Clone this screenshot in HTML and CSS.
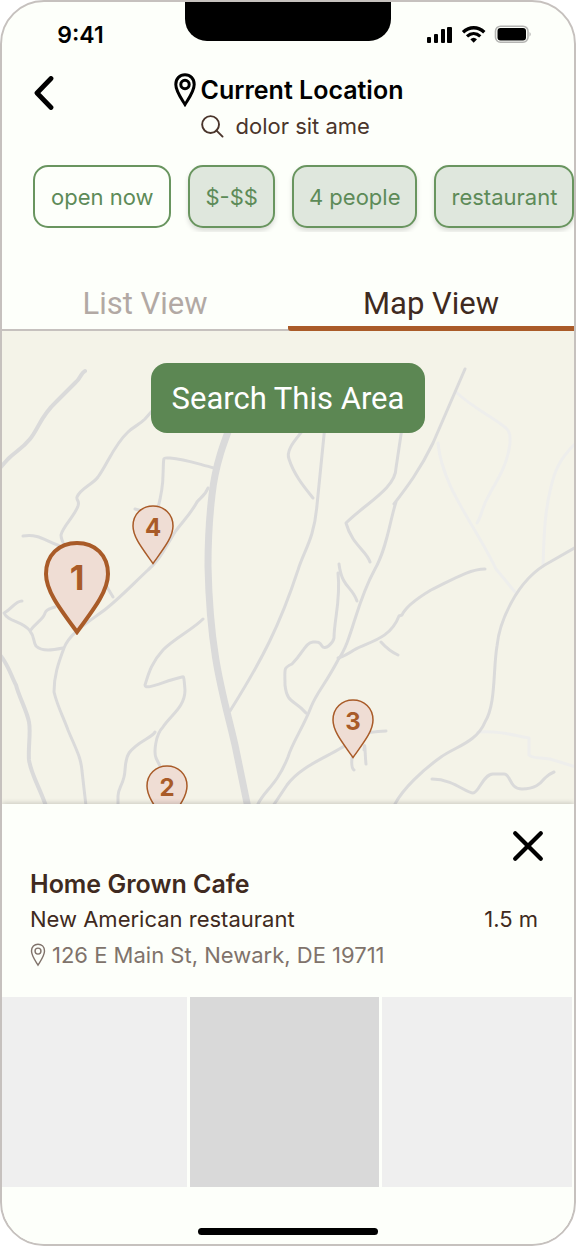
FILE: index.html
```html
<!DOCTYPE html>
<html lang="en">
<head>
<meta charset="utf-8">
<meta name="viewport" content="width=device-width, initial-scale=1">
<title>Current Location – Map View</title>
<link rel="stylesheet" href="styles.css">
</head>
<body>
<svg class="defs" aria-hidden="true">
  <symbol id="pin-outline" viewBox="0 0 22 34">
    <path d="M11 31.500C6 23.500 1.800 18 1.800 11.500C1.800 5.500 5.800 1.800 11 1.800S20.200 5.500 20.200 11.500C20.200 18 16 23.500 11 31.500Z" fill="none" stroke="currentColor"/>
    <circle cx="11" cy="11.500" r="4.200" fill="none" stroke="currentColor"/>
  </symbol>
  <symbol id="marker" viewBox="0 0 42 60">
    <path d="M21 58.500C10 43 1 32 1 21C1 9 10 1 21 1S41 9 41 21C41 32 32 43 21 58.500Z"/>
  </symbol>
  <symbol id="marker-large" viewBox="0 0 66 94">
    <path d="M33 91C16 68 2 50 2 33C2 14 15 2 33 2S64 14 64 33C64 50 50 68 33 91Z"/>
  </symbol>
</svg>
<div class="phone">
  <div class="status">
    <span class="time">9:41</span>
    <span class="notch"></span>
    <svg class="indicators" viewBox="0 0 106 20" aria-hidden="true">
      <rect x="0" y="12" width="4" height="6" rx="1"/>
      <rect x="7" y="9" width="4" height="9" rx="1"/>
      <rect x="14" y="4" width="4" height="14" rx="1"/>
      <rect x="20" y="2" width="5" height="16" rx="1"/>
      <path d="M36 7.300C42.500 1.200 51 1.200 57.300 7.300" fill="none" stroke="#000" stroke-width="3.400"/>
      <path d="M40 11.400C44 7.600 49.300 7.600 53.300 11.400" fill="none" stroke="#000" stroke-width="3.200"/>
      <path d="M43.300 14.300Q46.700 11.200 50 14.300L46.700 17.800Z"/>
      <rect x="68.500" y="1.200" width="32.500" height="16" rx="5" fill="none" stroke="#b4b4b2" stroke-width="1.600"/>
      <rect x="70.500" y="3" width="28.500" height="12.500" rx="3"/>
      <path d="M102.500 7Q105 9.200 102.500 11.800Z" fill="#b4b4b2"/>
    </svg>
  </div>
  <header class="header">
    <button class="back" type="button" aria-label="Back">
      <svg viewBox="0 0 20 34" aria-hidden="true"><path d="M17 2.500L3 17L17 31.500" fill="none" stroke="#000" stroke-width="4.800" stroke-linecap="round" stroke-linejoin="round"/></svg>
    </button>
    <div class="place">
      <h1 class="location"><svg class="location-icon" aria-hidden="true"><use href="#pin-outline"/></svg>Current Location</h1>
      <label class="search">
        <svg viewBox="0 0 24 24" aria-hidden="true"><circle cx="10" cy="10" r="8.800"/><path d="M16 16L22.500 22.500"/></svg>
        <input type="text" value="dolor sit ame" aria-label="Search">
      </label>
    </div>
  </header>
  <div class="filters">
    <button class="chip" type="button">open now</button>
    <button class="chip on" type="button">$-$$</button>
    <button class="chip on" type="button">4 people</button>
    <button class="chip on" type="button">restaurant</button>
  </div>
  <div class="tabs" role="tablist">
    <button class="tab" type="button" role="tab" aria-selected="false">List View</button>
    <button class="tab current" type="button" role="tab" aria-selected="true">Map View</button>
  </div>
  <main class="map">
    <svg class="roads" viewBox="2 331 572 473" preserveAspectRatio="xMidYMid slice" aria-hidden="true">
      <g class="lane">
        <path d="M456 392C474 409 489 414 506 428C511 433 510 438 510 443C507 468 496 481 488 497C482 507 482 515 477 523"/>
        <path d="M438 443C442 487 475 525 496 569L515 592"/>
        <path d="M576 443C558 460 554 474 551 487C544 514 544 540 543 566"/>
        <path d="M478 732C503 731 511 735 529 738V755C533 759 541 757 550 759L576 767"/>
      </g>
      <g class="street">
        <path d="M152 411L145 419C139 425 133 427 128 432C114 445 108 463 98 477C92 485 81 488 77 497C76 501 80 500 78 506C74 517 63 526 61 535C61 540 63 543 66 548"/>
        <path d="M23 536C40 534 43 540 60 546M107 587L113 597"/>
        <path d="M135 509L150 513L158 508C162 492 163 484 163 475C164 455 162 458 170 458C185 459 198 464 214 468"/>
        <path d="M208 488C205 496 200 498 197 502C190 515 182 522 175 532C165 548 160 560 148 570C135 582 122 596 107 608C92 620 70 632 64 648C58 664 54 676 54 692C58 708 63 716 68 730C75 747 81 757 82 771L86 806"/>
        <path d="M22 601C15 601 12 609 4 613C8 622 23 621 30 631C35 637 33 642 36 646C42 652 53 650 63 648M30 631C36 622 44 619 45 613C47 608 50 609 55 607"/>
        <path d="M203 619C192 630 175 638 163 650C152 662 149 672 145 685C145 691 164 681 182 677C184 676 184 678 185 690C185 707 171 715 163 727C155 735 154 753 156 758L160 766"/>
        <path d="M155 732C152 738 138 741 129 753C124 761 126 770 124 777C122 786 118 789 118 796V806"/>
        <path d="M325 425L317 505C314 540 304 550 298 570C280 625 262 660 230 711"/>
        <path d="M304 428C300 436 285 448 289 459C294 475 305 488 313 498"/>
        <path d="M402 428L396 468C396 488 365 504 346 523C352 545 367 551 370 562"/>
        <path d="M465 369L433 443C420 470 407 487 394 504M396 502C390 520 387 548 375 569C355 605 353 639 338 660C325 685 317 692 311 707C304 726 292 743 288 757C276 787 264 790 257 806"/>
        <path d="M485 569C469 569 450 581 431 590C421 596 406 606 402 615L399 616C390 640 367 642 354 650Q345 656 338 658"/>
        <path d="M339 564C342 588 352 586 357 601M338 573C341 600 334 620 334 638C333 643 325 651 322 646C319 641 317 642 313 642C305 643 304 652 292 664C283 668 285 669 285 685C287 704 295 700 306 713"/>
        <path d="M381 642Q389 651 398 655M386 731C350 732 350 745 341 748C325 758 300 767 287 785L273 806M364 750C365 737 365 756 366 764M352 758Q351 768 354 770"/>
        <path d="M576 547L550 562C515 580 499 625 497 646C493 669 496 705 485 722C477 742 455 747 441 757C424 769 402 789 394 806"/>
        <path d="M432 779C453 779 466 793 473 793C479 793 483 774 493 774H504C511 774 509 789 522 789C535 789 540 784 545 778Q549 774 554 772"/>
      </g>
      <path class="road" d="M85 371C81 373 80 379 76 382L56 402C40 417 39 428 30 439C22 449 16 451 8 459L0 468M0 655C8 664 12 678 16 685C19 697 27 711 29 722C31 732 28 747 29 760C31 774 38 784 46 806"/>
      <path class="highway" d="M242 395C227 435 216 458 212 495C209 520 208 545 208 566C210 661 225 700 235 745L248 808"/>
    </svg>
    <button class="pin pin-four" type="button"><svg aria-hidden="true"><use href="#marker"/></svg><span>4</span></button>
    <button class="pin pin-two" type="button"><svg aria-hidden="true"><use href="#marker"/></svg><span>2</span></button>
    <button class="pin pin-three" type="button"><svg aria-hidden="true"><use href="#marker"/></svg><span>3</span></button>
    <button class="pin pin-one" type="button"><svg aria-hidden="true"><use href="#marker-large"/></svg><span>1</span></button>
    <button class="search-area" type="button">Search This Area</button>
  </main>
  <section class="sheet">
    <button class="close" type="button" aria-label="Close">
      <svg viewBox="0 0 30 30" aria-hidden="true"><path d="M3 3L27 27M27 3L3 27" stroke="#000" stroke-width="4" stroke-linecap="round"/></svg>
    </button>
    <div class="details">
      <h2 class="name">Home Grown Cafe</h2>
      <div class="summary"><span>New American restaurant</span><span>1.5 m</span></div>
      <p class="address"><svg aria-hidden="true"><use href="#pin-outline"/></svg>126 E Main St, Newark, DE 19711</p>
    </div>
    <div class="photos"><div class="photo"></div><div class="photo main"></div><div class="photo"></div></div>
    <div class="home-bar"></div>
  </section>
</div>
</body>
</html>
```
FILE: styles.css
```css
* { box-sizing: border-box; }
body { margin: 0; background: #fff; font-family: Inter, "Liberation Sans", sans-serif; font-size: 22px; color: #3f2a20; }
button { margin: 0; padding: 0; border: 0; background: none; font: inherit; color: inherit; cursor: pointer; }
h1, h2, p { margin: 0; }
svg { display: block; }
.defs { position: absolute; width: 0; height: 0; }

.phone { display: flex; flex-direction: column; min-height: 100vh; border: 2px solid #c6c1be; border-radius: 44px; background: #fdfffa; overflow: hidden; }

.status { display: grid; grid-template-columns: 1fr 206px 1fr; height: 66px; color: #000; }
.time { justify-self: center; margin-right: 26px; padding-top: 18px; font-size: 23px; line-height: 30px; font-weight: 600; }
.notch { height: 39px; border-radius: 0 0 22px 22px; background: #000; }
.indicators { justify-self: center; width: 106px; height: 20px; margin: 23px 5px 0 0; }

.header { display: grid; grid-template-columns: 84px 1fr 84px; align-items: start; }
.back { width: 20px; height: 34px; margin: 8px 0 0 32px; }
.place { display: flex; flex-direction: column; align-items: center; }
.location { display: flex; align-items: center; gap: 4px; height: 42px; padding-top: 2px; font-size: 25px; line-height: 32px; font-weight: 600; color: #000; }
.location-icon { width: 24px; height: 34px; stroke-width: 3; }
.search { display: flex; align-items: center; gap: 12px; height: 32px; }
.search svg { width: 23px; height: 23px; fill: none; stroke: #4a352b; stroke-width: 2; stroke-linecap: round; }
.search input { width: 140px; padding: 0; border: 0; outline: 0; background: none; font: inherit; color: #4a352b; }

.filters { display: flex; gap: 17px; padding: 23px 0 4px 31px; overflow: hidden; }
.chip { flex: none; height: 63px; padding: 0 15px; border: 2px solid #69955f; border-radius: 15px; color: #5d8b58; }
.chip:first-child { padding: 0 16px; }
.chip.on { background: #dfe7dd; box-shadow: 0 3px 5px #00000024; }

.tabs { display: grid; grid-template-columns: 1fr 1fr; height: 99px; border-bottom: 2px solid #c6c1be; }
.tab { padding-top: 45px; font-family: Roboto, sans-serif; font-size: 31px; color: #b2a9a4; }
.tab.current { margin-bottom: -2px; padding-top: 48px; border-bottom: 5px solid #aa5b28; border-radius: 3px 0 0 3px; color: #3f2a20; }

.map { position: relative; flex: 1 0 473px; display: flex; justify-content: center; align-items: start; padding-top: 32px; overflow: hidden; background: #f4f3e8; }
.roads { position: absolute; inset: 0; width: 100%; height: 100%; fill: none; stroke: #dadada; stroke-linecap: round; stroke-linejoin: round; }
.lane { stroke: #eeeeec; stroke-width: 3; }
.street { stroke-width: 3; }
.road { stroke-width: 4; }
.highway { stroke-width: 7; }
.search-area { position: relative; height: 70px; padding: 0 21px; border-radius: 16px; background: #5c8753; color: #fff; font-family: Roboto, sans-serif; font-size: 31px; }

.pin { position: absolute; display: grid; width: 42px; height: 60px; color: #a95b28; font-size: 24px; line-height: 46px; font-weight: 700; }
.pin svg, .pin span { grid-area: 1 / 1; width: 100%; }
.pin svg { height: 100%; fill: #efddd4; stroke: #a95b28; stroke-width: 1.5; }
.pin-one { left: 42px; top: 210px; width: 66px; height: 94px; font-size: 34px; line-height: 74px; }
.pin-one svg { stroke-width: 4; }
.pin-two { left: 144px; top: 434px; }
.pin-three { left: 330px; top: 368px; }
.pin-four { left: 130px; top: 174px; }

.sheet { position: relative; display: flex; flex-direction: column; background: #fdfffa; box-shadow: 0 -1px 5px #0000002e; }
.close { align-self: flex-end; width: 32px; height: 32px; margin: 26px 30px 0 0; }
.details { padding: 4px 36px 23px 28px; }
.name { font-size: 25px; line-height: 36px; font-weight: 600; }
.summary { display: flex; justify-content: space-between; line-height: 34px; }
.address { display: flex; align-items: center; gap: 6px; line-height: 38px; color: #80736b; }
.address svg { width: 16px; height: 24px; stroke-width: 2; }
.photos { display: grid; grid-template-columns: 37fr 38fr 38fr; gap: 3px; padding-right: 2px; }
.photo { height: 190px; background: #efefef; }
.photo.main { background: #d9d9d9; }
.home-bar { align-self: center; width: 180px; height: 7px; margin: 41px 0 9px; border-radius: 4px; background: #000; }
```
